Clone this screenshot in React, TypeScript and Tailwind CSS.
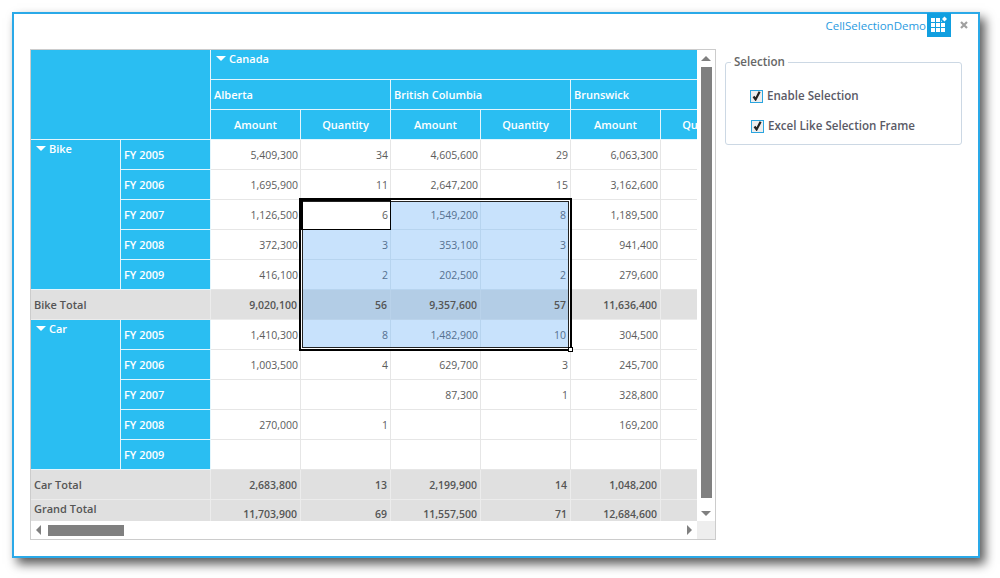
const sans = "font-['Open_Sans','Liberation_Sans',sans-serif]";

const columns = ["Amount", "Quantity", "Amount", "Quantity", "Amount", "Quantity"];

const sections = [
  {
    name: "Bike",
    rows: [
      { label: "FY 2005", values: ["5,409,300", "34", "4,605,600", "29", "6,063,300", ""] },
      { label: "FY 2006", values: ["1,695,900", "11", "2,647,200", "15", "3,162,600", ""] },
      { label: "FY 2007", values: ["1,126,500", "6", "1,549,200", "8", "1,189,500", ""] },
      { label: "FY 2008", values: ["372,300", "3", "353,100", "3", "941,400", ""] },
      { label: "FY 2009", values: ["416,100", "2", "202,500", "2", "279,600", ""] },
    ],
    total: ["9,020,100", "56", "9,357,600", "57", "11,636,400", ""],
  },
  {
    name: "Car",
    rows: [
      { label: "FY 2005", values: ["1,410,300", "8", "1,482,900", "10", "304,500", ""] },
      { label: "FY 2006", values: ["1,003,500", "4", "629,700", "3", "245,700", ""] },
      { label: "FY 2007", values: ["", "", "87,300", "1", "328,800", ""] },
      { label: "FY 2008", values: ["270,000", "1", "", "", "169,200", ""] },
      { label: "FY 2009", values: ["", "", "", "", "", ""] },
    ],
    total: ["2,683,800", "13", "2,199,900", "14", "1,048,200", ""],
  },
];

const grandTotal = ["11,703,900", "69", "11,557,500", "71", "12,684,600", ""];

const head = "bg-[#2abef2] text-white font-semibold border-r border-b border-[#e4f6fd]";

function Triangle() {
  return <span className="w-0 h-0 border-x-[5px] border-x-transparent border-t-[5px] border-t-white" />;
}

function Selection() {
  return (
    <div className="absolute left-[268px] top-[148px] w-[273px] h-[153px] border-2 border-black pointer-events-none">
      <div className="absolute inset-0 border border-white" />
      <div className="absolute inset-[1px] border border-[#222222]" />
      <div className="absolute left-0 top-0 w-[90px] h-[30px] border-l-2 border-t border-r border-b border-l-black border-t-black border-r-black border-b-black" />
      <div className="absolute right-[-3px] bottom-[-3px] w-[5px] h-[5px] bg-white border border-black" />
    </div>
  );
}

function PivotTable() {
  return (
    <div className="relative w-[666px] h-[471px] overflow-hidden">
      <div className={`grid grid-cols-[90px_90px_90px_90px_90px_90px_90px_90px] auto-rows-[30px] w-[720px] text-[11px] ${sans}`}>
        <div className={`${head} col-span-2 row-span-3`} />
        <div className={`${head} col-span-6 flex items-start gap-[3px] pl-[5px] pt-[1px]`}>
          <span className="mt-[5px] flex"><Triangle /></span>
          <span>Canada</span>
        </div>
        <div className={`${head} col-span-2 flex items-center pl-[3px] pt-[2px]`}>Alberta</div>
        <div className={`${head} col-span-2 flex items-center pl-[3px] pt-[2px]`}>British Columbia</div>
        <div className={`${head} col-span-2 flex items-center pl-[3px] pt-[2px]`}>Brunswick</div>
        {columns.map((c, i) => (
          <div key={i} className={`${head} flex items-center justify-center pt-[2px]`}>{c}</div>
        ))}
        {sections.map((s, sectionIndex) => (
          <Section key={s.name} section={s} sectionIndex={sectionIndex} />
        ))}
        <div className="col-span-2 bg-[#e0e0e0] border-r border-[#ececec] pl-[3px] pt-[1px] font-semibold text-[#555]">Grand Total</div>
        {grandTotal.map((v, i) => (
          <div key={i} className="bg-[#e0e0e0] border-r border-[#ececec] text-right pr-[3px] pt-[7px] font-semibold text-[10.5px] text-[#555]">{v}</div>
        ))}
      </div>
      <Selection />
    </div>
  );
}

function Section({ section, sectionIndex }: { section: (typeof sections)[number]; sectionIndex: number }) {
  return (
    <>
      <div className={`${head} row-span-5 flex items-start gap-[3px] pl-[5px] pt-[1px]`}>
        <span className="mt-[5px] flex"><Triangle /></span>
        <span>{section.name}</span>
      </div>
      {section.rows.map((row, r) => (
        <div key={row.label} className="contents">
          <div className={`${head} flex items-center pl-[3px] pt-[2px]`}>{row.label}</div>
          {row.values.map((v, c) => {
            const active = sectionIndex === 0 && r === 2 && c === 1;
            const selected =
              !active && c >= 1 && c <= 3 && ((sectionIndex === 0 && r >= 2) || (sectionIndex === 1 && r === 0));
            const inFrame = selected || active;
            return (
              <div
                key={c}
                className={`flex items-center justify-end pt-[2px] border-r border-b text-[10.5px] ${
                  inFrame && c === 3 ? "pr-[4px]" : "pr-[2px]"
                } ${selected ? "bg-[#c8e2fc] border-[#b7d4ef] text-[#55708f]" : "bg-white border-[#e6e6e6] text-[#5c5c5c]"}`}
              >
                {v}
              </div>
            );
          })}
        </div>
      ))}
      <div className="col-span-2 bg-[#e0e0e0] border-r border-b border-[#ececec] flex items-center pl-[3px] pt-[2px] font-semibold text-[#555]">
        {section.name} Total
      </div>
      {section.total.map((v, c) => (
        <div
          key={c}
          className={`flex items-center justify-end pt-[2px] border-r border-b font-semibold text-[10.5px] text-[#555] ${
            sectionIndex === 0 && c === 3 ? "pr-[4px]" : "pr-[3px]"
          } ${sectionIndex === 0 && c >= 1 && c <= 3 ? "bg-[#b3cde6] border-[#b9d2ea]" : "bg-[#e0e0e0] border-[#ececec]"}`}
        >
          {v}
        </div>
      ))}
    </>
  );
}

function Arrow({ dir }: { dir: "up" | "down" | "left" | "right" }) {
  const shape = {
    up: "border-x-[5px] border-x-transparent border-b-[5px] border-b-[#808080]",
    down: "border-x-[5px] border-x-transparent border-t-[5px] border-t-[#808080]",
    left: "border-y-[5px] border-y-transparent border-r-[5px] border-r-[#808080]",
    right: "border-y-[5px] border-y-transparent border-l-[5px] border-l-[#808080]",
  }[dir];
  return <span className={`w-0 h-0 ${shape}`} />;
}

function GridIcon() {
  return (
    <svg width="24" height="24" viewBox="0 0 24 24" className="block">
      {[4, 9, 14].map((y) =>
        [4, 9, 14].map((x) => <rect key={`${x}-${y}`} x={x} y={y + 1} width="4" height="4" fill="white" />)
      )}
      <circle cx="17.5" cy="6" r="3.6" fill="#119fe0" />
      <path d="M17.5 3.5 L20 6 L17.5 8.5 L15 6 Z" fill="white" />
    </svg>
  );
}

function Checkbox({ label, className }: { label: string; className: string }) {
  return (
    <div className={`flex items-center gap-[4px] ${className}`}>
      <span className="w-[13px] h-[13px] border border-[#2aa5e0] bg-[#eeeeee] flex items-center justify-center">
        <svg width="9" height="10" viewBox="0 0 9 10"><path d="M1.5 5.5 L3.6 8.4 L7.6 0.8" fill="none" stroke="#222" strokeWidth="2.2" /></svg>
      </span>
      <span className="text-[11.6px] font-semibold text-[#5a5a66]">{label}</span>
    </div>
  );
}

export default function App() {
  return (
    <div className="w-[1000px] h-[578px] bg-white overflow-hidden pl-[12px] pt-[12px]">
      <div className={`w-[968px] h-[546px] bg-white border-2 border-[#2aa9e8] shadow-[5px_6px_10px_rgba(0,0,0,0.65)] ${sans}`}>
        <div className="h-[24px] flex justify-end items-start pr-[10px]">
          <span className="text-[11.5px] text-[#2a9be0] leading-[24px] mr-px">CellSelectionDemo</span>
          <span className="w-[24px] h-[24px] bg-[#119fe0] -mt-px"><GridIcon /></span>
          <svg width="8" height="8" viewBox="0 0 8 8" className="ml-[9px] mt-[7px]">
            <path d="M1 1 L7 7 M7 1 L1 7" stroke="#a0a0a0" strokeWidth="2.2" />
          </svg>
        </div>
        <div className="flex items-start pl-[16px] pt-[11px]">
          <div className="w-[686px] h-[491px] border border-[#cccccc] grid grid-cols-[666px_18px] grid-rows-[471px_18px]">
            <PivotTable />
            <div className="flex flex-col items-center bg-white">
              <span className="h-[17px] flex items-center"><Arrow dir="up" /></span>
              <div className="w-[11px] h-[431px] bg-[#808080]" />
              <span className="h-[23px] flex items-end pb-[5px]"><Arrow dir="down" /></span>
            </div>
            <div className="flex items-center pl-[5px] bg-white">
              <Arrow dir="left" />
              <div className="ml-[7px] w-[76px] h-[11px] bg-[#808080]" />
              <span className="ml-auto mr-[5px] flex"><Arrow dir="right" /></span>
            </div>
            <div className="bg-[#eeeeee]" />
          </div>
          <fieldset className="ml-[9px] w-[237px] h-[91px] mt-[5px] border border-[#ccd8e4] rounded-[3px] pl-[24px] pt-[11px]">
            <legend className="ml-[-19px] px-[3px] text-[11.6px] font-semibold text-[#666] leading-[16px]">Selection</legend>
            <Checkbox label="Enable Selection" className="h-[30px]" />
            <Checkbox label="Excel Like Selection Frame" className="h-[30px] ml-px" />
          </fieldset>
        </div>
      </div>
    </div>
  );
}
